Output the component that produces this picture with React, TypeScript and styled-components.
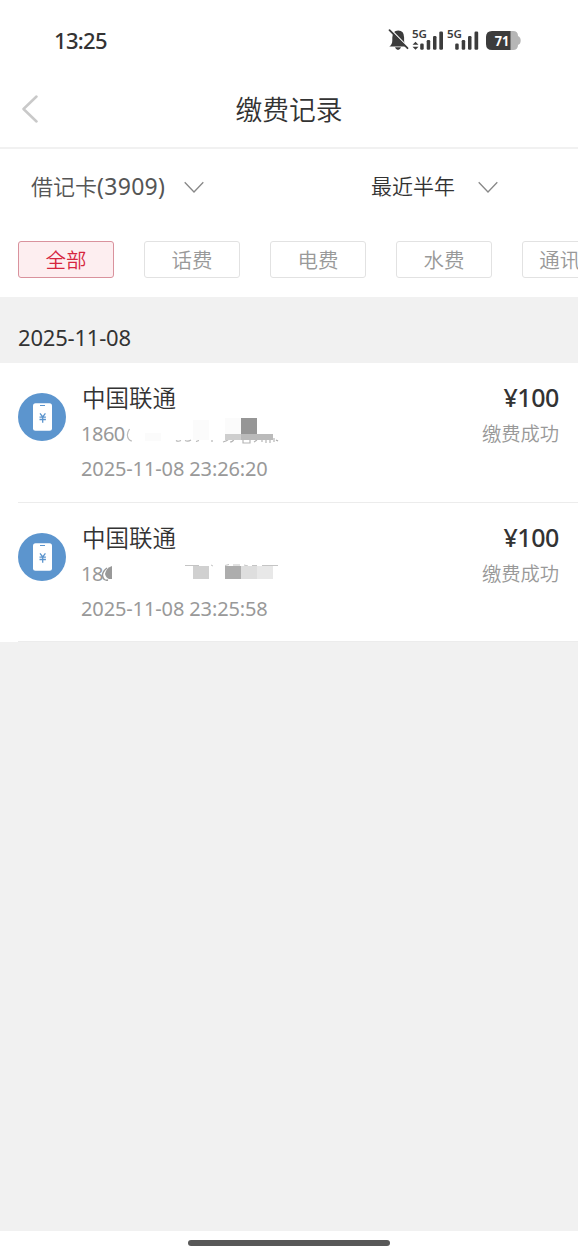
import React from "react";
import styled, { createGlobalStyle } from "styled-components";

const GlobalStyle = createGlobalStyle`
  * { box-sizing: border-box; }
  body {
    margin: 0;
    background: #f1f1f1;
    color: #333;
    font-family: "Noto Sans", "Noto Sans CJK SC", sans-serif;
  }
`;

const Screen = styled.div`
  display: flex;
  flex-direction: column;
  width: 578px;
  height: 1255px;
  overflow: hidden;
  background: #f1f1f1;
`;

const StatusBar = styled.header`
  display: flex;
  align-items: center;
  justify-content: space-between;
  height: 71px;
  padding: 10px 57px 0 54px;
  background: #fff;
`;

const Clock = styled.span`
  margin-top: -2px;
  font-size: 22px;
  font-weight: 500;
  line-height: 30px;
  letter-spacing: -0.7px;
`;

const NavBar = styled.nav`
  display: grid;
  grid-template-columns: 60px 1fr 60px;
  align-items: center;
  height: 78px;
  background: #fff;
  border-bottom: 2px solid #f1f1f1;
`;

const BackButton = styled.button`
  display: flex;
  padding: 0 0 0 21px;
  border: 0;
  background: none;
`;

const Title = styled.h1`
  margin: 2px 0 0;
  text-align: center;
  font-size: 26.8px;
  font-weight: 350;
  line-height: 40px;
`;

const Filters = styled.div`
  display: grid;
  grid-template-columns: 340px 1fr;
  height: 74px;
  padding-left: 31px;
  background: #fff;
`;

const Filter = styled.div<{ $size: number; $gap: number; $color: string }>`
  display: flex;
  align-items: center;
  gap: ${(p) => p.$gap}px;
  color: ${(p) => p.$color};
  font-size: ${(p) => p.$size}px;
  font-weight: 350;
  line-height: 32px;

  span {
    margin-top: -1px;
  }

  svg {
    margin-top: 2px;
  }
`;

const CardNumber = styled.span`
  font-size: 23px;
  font-weight: 400;
  letter-spacing: 0.3px;
`;

const Chips = styled.div`
  display: flex;
  gap: 30px;
  height: 74px;
  padding: 18px 0 0 18px;
  overflow: hidden;
  background: #fff;
`;

const Chip = styled.button<{ $active?: boolean }>`
  flex: 0 0 96px;
  height: 37px;
  padding: 2px 0 0;
  border: 1px solid ${(p) => (p.$active ? "#d9929d" : "#e2e2e2")};
  border-radius: 3px;
  background: ${(p) => (p.$active ? "#fdeef0" : "#fff")};
  color: ${(p) => (p.$active ? "#d6263f" : "#999")};
  font-family: inherit;
  font-size: 20.5px;
  font-weight: 350;
  line-height: 33px;
  white-space: nowrap;
`;

const DateHeading = styled.h2`
  height: 66px;
  margin: 0;
  padding: 25px 18px 0;
  font-size: 22px;
  font-weight: 400;
  line-height: 30px;
  letter-spacing: -0.2px;
`;

const Records = styled.ul`
  margin: 0;
  padding: 0;
  list-style: none;
  background: #fff;
`;

const Record = styled.li`
  display: grid;
  grid-template-columns: 48px 1fr auto;
  column-gap: 16px;
  height: 140px;
  margin-left: 18px;
  padding: 18px 18px 0 0;
  border-bottom: 1px solid #ececec;

  &:last-child {
    height: 139px;
  }
`;

const RecordIcon = styled.svg`
  display: block;
  margin-top: 12px;
`;

const Details = styled.div`
  display: flex;
  flex-direction: column;
`;

const Payee = styled.div`
  height: 35px;
  color: #333;
  font-size: 23.5px;
  font-weight: 350;
  line-height: 34px;
`;

const Account = styled.div`
  display: flex;
  align-items: flex-start;
  height: 36px;
  margin-left: -1px;
  color: #999;
  font-size: 20px;
  line-height: 36px;
  letter-spacing: -0.5px;
`;

const Digits = styled.span<{ $width: number }>`
  width: ${(p) => p.$width}px;
  white-space: nowrap;
`;

const Time = styled.div`
  margin-left: -1px;
  color: #999;
  font-size: 20px;
  line-height: 34px;
  letter-spacing: -0.12px;
`;

const Payment = styled.div`
  text-align: right;
`;

const Amount = styled.div`
  height: 35px;
  margin-right: 1px;
  font-size: 25px;
  font-weight: 550;
  line-height: 32px;
  letter-spacing: -0.4px;
`;

const State = styled.div`
  margin-right: 1px;
  color: #999;
  font-size: 19.3px;
  font-weight: 350;
  line-height: 36px;
`;

const HomeArea = styled.footer`
  display: flex;
  justify-content: center;
  height: 24px;
  margin-top: auto;
  padding: 9px 1px 0 0;
  background: #fff;
`;

const HomeBar = styled.div`
  width: 202px;
  height: 6px;
  border-radius: 3px;
  background: #585858;
`;

const SystemIcons = () => (
  <svg width="134" height="28" viewBox="387 27 134 28" fill="#3c3c3c">
    <path d="M389.300 46.500q3-2 3-6v-3q0-7 5.900-7t5.900 7v3q0 4 3 6z" />
    <path d="M395 47.300h6q-1 2.700-3 2.700t-3-2.700" />
    <path d="M390.500 29.200l18 18.500" stroke="#fff" strokeWidth="1.500" />
    <path d="M389.500 30.200l18 18" stroke="#3c3c3c" strokeWidth="1.800" strokeLinecap="round" />
    <path d="M412.500 44.800l3-3 3 3zM412.500 46.800l3 3 3-3z" />
    <rect x="420.200" y="43.500" width="3.500" height="6.300" rx="1.200" />
    <rect x="426.700" y="40" width="3.500" height="9.800" rx="1.200" />
    <rect x="433" y="36" width="3.500" height="13.800" rx="1.200" />
    <rect x="439.300" y="31.500" width="3.700" height="18.300" rx="1.200" />
    <rect x="455.200" y="43.500" width="3.500" height="6.300" rx="1.200" />
    <rect x="461.700" y="40" width="3.500" height="9.800" rx="1.200" />
    <rect x="468" y="36" width="3.500" height="13.800" rx="1.200" />
    <rect x="474.500" y="31.500" width="3.700" height="18.300" rx="1.200" />
    <g fontFamily="Noto Sans" fontSize="10.800" fontWeight="600">
      <text x="412" y="37.700" textLength="15" lengthAdjust="spacingAndGlyphs">5G</text>
      <text x="447" y="37.700" textLength="15" lengthAdjust="spacingAndGlyphs">5G</text>
    </g>
    <path d="M510 31h3q5 0 5 5 2.700 1 2.700 4.500t-2.700 4.500q0 5-5 5h-3z" fill="#b6b6b6" />
    <path d="M510.500 31H492q-6 0-6 6v7q0 6 6 6h18.500z" />
    <text x="494.800" y="45.600" fontFamily="Noto Sans" fontSize="14" fontWeight="700" fill="#fff" textLength="14.500" lengthAdjust="spacingAndGlyphs">71</text>
  </svg>
);

const ChevronDown = () => (
  <svg width="20" height="14" viewBox="0 0 20 14" fill="none" stroke="#888" strokeWidth="1.300">
    <path d="M.7 2.300L10 12l9.300-9.700" />
  </svg>
);

const PhoneYuan = () => (
  <RecordIcon width="48" height="48" viewBox="0 0 48 48">
    <circle cx="24" cy="24" r="24" fill="#5c95ce" />
    <rect x="15" y="10.300" width="19" height="27.500" rx="2.500" fill="#fff" />
    <path d="M22 12.500h5" stroke="#5c95ce" strokeWidth="1" />
    <path d="M22 20.300l2.700 3.700 2.700-3.700M21.500 24.200h6.400M21.500 26.500h6.400M24.700 24v5.700" fill="none" stroke="#5c95ce" strokeWidth="1.300" />
  </RecordIcon>
);

const MaskA = () => (
  <svg width="154" height="28" viewBox="125 416 154 28">
    <path d="M129.500 429q-4 6-.5 10.500 1.500 1.500 3 1.500" fill="none" stroke="#bbb" strokeWidth="1.200" />
    <path d="M176 440.500q2 1.500 5 0M185 440.500q3 1.500 6-.5M196 441.500l3-1M212 440v2M223 442q4-1 6-3h5q-1 3-4 3M243 440v3h7v-3M254 442l3-2M262 440v2M266 440v3M270 440v3M274 438v4" fill="none" stroke="#b5b5b5" strokeWidth="1.200" />
    <path d="M193 420h16v20h-16zM145 433h16v8h-16zM225 418h16v16h-16z" fill="#fbfbfb" />
    <path d="M241 418h16v16h-16z" fill="#969696" />
    <path d="M225 434h16v6h-16z" fill="#cecece" />
    <path d="M241 434h32v6h-32z" fill="#bababa" />
    <path d="M276 440l2 1" stroke="#aaa" strokeWidth="1.300" />
  </svg>
);

const MaskB = () => (
  <svg width="178" height="28" viewBox="101 556 178 28">
    <path d="M107 568q-5 4-4.500 8 1 5 5.500 4" fill="none" stroke="#999" strokeWidth="1.500" />
    <path d="M112 566v13h-3q-3-1-4-5 1-6 7-8" fill="#999" />
    <path d="M185 565.500h14M211 565l2 1M225 565.500l4-1M233 565h7M244 565l4 1M252 565.500h5M262 565.500h16" fill="none" stroke="#c4c4c4" strokeWidth="1" />
    <path d="M193 566h16v13h-16z" fill="#d0d0d0" />
    <path d="M225 566h16v13h-16z" fill="#adadad" />
    <path d="M241 566h16v13h-16z" fill="#dedede" />
    <path d="M257 566h16v13h-16z" fill="#e8e8e8" />
  </svg>
);

const chips = ["全部", "话费", "电费", "水费", "通讯费"];

const records = [
  { digits: "1860", width: 44, Mask: MaskA, time: "2025-11-08 23:26:20" },
  { digits: "18", width: 20, Mask: MaskB, time: "2025-11-08 23:25:58" },
];

export default function App() {
  return (
    <Screen>
      <GlobalStyle />
      <StatusBar>
        <Clock>13:25</Clock>
        <SystemIcons />
      </StatusBar>
      <NavBar>
        <BackButton aria-label="返回">
          <svg width="18" height="28" viewBox="0 0 18 28" fill="none" stroke="#c9c9c9" strokeWidth="2.500" strokeLinecap="round" strokeLinejoin="round">
            <path d="M15.500 1.500L2.500 14l13 12.500" />
          </svg>
        </BackButton>
        <Title>缴费记录</Title>
      </NavBar>
      <Filters>
        <Filter $size={22} $gap={19} $color="#555">
          <span>借记卡<CardNumber>(3909)</CardNumber></span>
          <ChevronDown />
        </Filter>
        <Filter $size={21} $gap={23} $color="#333">最近半年<ChevronDown /></Filter>
      </Filters>
      <Chips>
        {chips.map((label, i) => (
          <Chip key={label} $active={i === 0}>{label}</Chip>
        ))}
      </Chips>
      <DateHeading>2025-11-08</DateHeading>
      <Records>
        {records.map(({ digits, width, Mask, time }) => (
          <Record key={time}>
            <PhoneYuan />
            <Details>
              <Payee>中国联通</Payee>
              <Account>
                <Digits $width={width}>{digits}</Digits>
                <Mask />
              </Account>
              <Time>{time}</Time>
            </Details>
            <Payment>
              <Amount>¥100</Amount>
              <State>缴费成功</State>
            </Payment>
          </Record>
        ))}
      </Records>
      <HomeArea>
        <HomeBar />
      </HomeArea>
    </Screen>
  );
}
